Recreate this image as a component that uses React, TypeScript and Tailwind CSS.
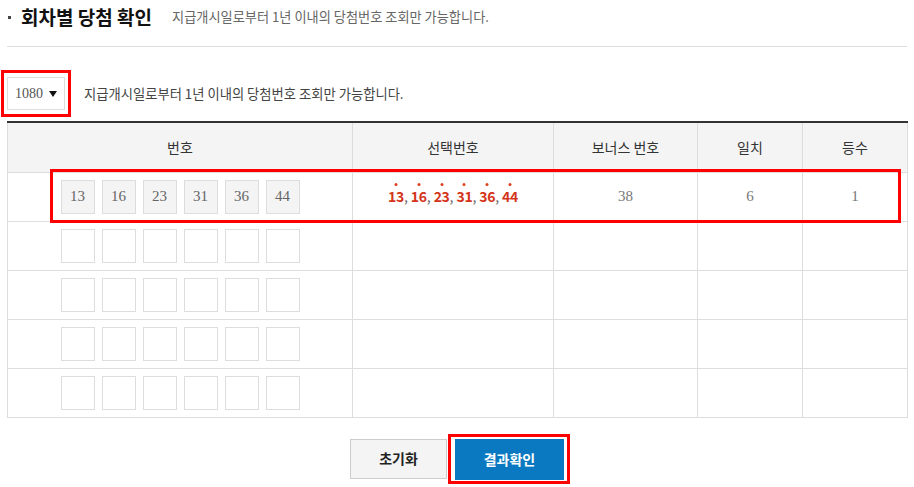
import React from "react";

const kr = { fontFamily: '"Noto Sans CJK KR", "Noto Sans", sans-serif' };
const num = { fontFamily: '"Liberation Serif", serif' };

const picked = ["13", "16", "23", "31", "36", "44"];
const cols = [
  { label: "번호", w: "w-[345px]" },
  { label: "선택번호", w: "w-[201px]" },
  { label: "보너스 번호", w: "w-[144px]" },
  { label: "일치", w: "w-[105px]" },
  { label: "등수", w: "w-[105px]" },
];

function NumberBoxes({ values }: { values?: string[] }) {
  return (
    <div className="flex justify-center gap-[7px]">
      {Array.from({ length: 6 }).map((_, i) => (
        <div
          key={i}
          className={`w-[34px] h-[34px] border border-[#dddddd] flex items-center justify-center text-[15px] text-[#666] ${
            values ? "bg-[#f4f4f4]" : "bg-white"
          }`}
          style={num}
        >
          {values ? values[i] : ""}
        </div>
      ))}
    </div>
  );
}

function Picked() {
  return (
    <div className="flex justify-center items-center text-[14px]" style={kr}>
      {picked.map((n, i) => (
        <span key={n} className="flex items-center">
          <span className="relative font-bold text-[#d4341a] tracking-[-0.3px]">
            <span className="absolute left-1/2 -translate-x-1/2 -top-[3px] w-[3px] h-[3px] rounded-full bg-[#e0401e]" />
            {n}
          </span>
          {i < picked.length - 1 && <span className="text-[#666] mr-[3px]">,</span>}
        </span>
      ))}
    </div>
  );
}

export default function App() {
  return (
    <div className="w-[914px] h-[487px] bg-white overflow-hidden" style={kr}>
      <div className="ml-[7px] w-[900px]">
        {/* title */}
        <div className="h-[47px] border-b border-[#dddddd] flex items-start pt-[4px]">
          <div className="flex items-center h-[26px]">
            <span className="w-[3px] h-[3px] bg-[#444] ml-[1px] mr-[10px]" />
            <h2 className="text-[19px] font-bold text-[#111] leading-[26px]">회차별 당첨 확인</h2>
            <span className="ml-[20px] text-[13.2px] text-[#666] leading-[26px]">
              지급개시일로부터 1년 이내의 당첨번호 조회만 가능합니다.
            </span>
          </div>
        </div>

        {/* draw select */}
        <div className="mt-[30px] flex items-center">
          <div className="relative">
            <div className="w-[58px] h-[33px] border border-[#dddddd] flex items-center pl-[7px] gap-[6px] text-[14px] text-[#555]">
              <span style={num}>1080</span>
              <svg width="8" height="6" viewBox="0 0 8 6">
                <path d="M0 0h8L4 6z" fill="#111" />
              </svg>
            </div>
            <div className="absolute -left-[6px] -right-[6px] -top-[7px] -bottom-[7px] border-[3px] border-[#ff0000]" />
          </div>
          <span className="ml-[19px] text-[13.3px] text-[#444]">
            지급개시일로부터 1년 이내의 당첨번호 조회만 가능합니다.
          </span>
        </div>

        {/* table */}
        <div className="relative mt-[11px]">
          <table className="w-[900px] border-collapse table-fixed border-t-2 border-[#333]">
            <thead>
              <tr className="h-[50px] bg-[#f4f4f4]">
                {cols.map((c) => (
                  <th
                    key={c.label}
                    className={`${c.w} border border-[#dddddd] border-t-0 text-[14px] font-normal text-[#333]`}
                  >
                    {c.label}
                  </th>
                ))}
              </tr>
            </thead>
            <tbody>
              <tr className="h-[49px]">
                <td className="border border-[#dddddd]">
                  <NumberBoxes values={picked} />
                </td>
                <td className="border border-[#dddddd]">
                  <Picked />
                </td>
                <td className="border border-[#dddddd] text-center text-[15px] text-[#777]" style={num}>
                  38
                </td>
                <td className="border border-[#dddddd] text-center text-[15px] text-[#777]" style={num}>
                  6
                </td>
                <td className="border border-[#dddddd] text-center text-[15px] text-[#777]" style={num}>
                  1
                </td>
              </tr>
              {[0, 1, 2, 3].map((r) => (
                <tr key={r} className="h-[49px]">
                  <td className="border border-[#dddddd]">
                    <NumberBoxes />
                  </td>
                  <td className="border border-[#dddddd]" />
                  <td className="border border-[#dddddd]" />
                  <td className="border border-[#dddddd]" />
                  <td className="border border-[#dddddd]" />
                </tr>
              ))}
            </tbody>
          </table>
          <div className="absolute left-[43px] top-[48px] w-[851px] h-[54px] border-[3px] border-[#ff0000]" />
        </div>

        {/* buttons */}
        <div className="mt-[21px] flex justify-center gap-[8px]">
          <button className="w-[97px] h-[40px] bg-[#f4f4f4] border border-[#cccccc] text-[14px] font-bold text-[#222]">
            초기화
          </button>
          <div className="relative">
            <button className="w-[109px] h-[41px] bg-[#0a79c1] text-[14px] font-bold text-white">
              결과확인
            </button>
            <div className="absolute -left-[7px] -right-[6px] -top-[5px] -bottom-[4px] border-[3px] border-[#ff0000]" />
          </div>
        </div>
      </div>
    </div>
  );
}
